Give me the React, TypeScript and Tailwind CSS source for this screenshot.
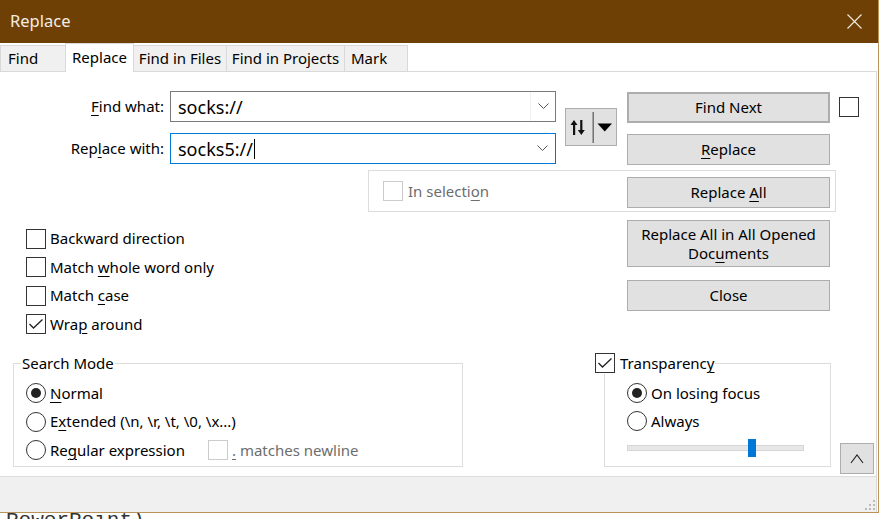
import React from 'react';

function CheckBox({ checked = false, disabled = false }: { checked?: boolean; disabled?: boolean }) {
  return (
    <span
      className={`flex h-[20px] w-[20px] shrink-0 items-center justify-center border bg-white ${
        disabled ? 'border-[#cccccc]' : 'border-[#333333]'
      }`}
    >
      {checked && (
        <svg width="16" height="12" viewBox="0 0 16 12">
          <polyline points="1.5,6 5.5,10 14.5,1.5" fill="none" stroke="#222" strokeWidth="1.3" />
        </svg>
      )}
    </span>
  );
}

function Radio({ on = false }: { on?: boolean }) {
  return (
    <span className="flex h-[20px] w-[20px] shrink-0 items-center justify-center rounded-full border border-[#333333] bg-white">
      {on && <span className="h-[10px] w-[10px] rounded-full bg-[#222]" />}
    </span>
  );
}

function Btn({ children, className = '' }: { children: React.ReactNode; className?: string }) {
  return (
    <div
      className={`flex items-center justify-center border border-[#adadad] bg-[#e1e1e1] text-center leading-[19px] ${className}`}
    >
      {children}
    </div>
  );
}

function Combo({ value, focused = false, caret = false }: { value: string; focused?: boolean; caret?: boolean }) {
  return (
    <div
      className={`ml-[6px] flex h-[31px] w-[386px] items-center border bg-white ${
        focused ? 'border-[#0078d7]' : 'border-[#7a7a7a]'
      }`}
    >
      <div className="flex flex-1 items-center pl-[7px] text-[18px] leading-[24px]">
        {value}
        {caret && <span className="ml-[1px] h-[20px] w-px bg-black" />}
      </div>
      <div className={`flex h-full w-[25px] items-center justify-center ${focused ? '' : 'border-l border-[#f0f0f0]'}`}>
        <svg width="11" height="7" viewBox="0 0 11 7">
          <polyline points="0.5,0.5 5.5,5.5 10.5,0.5" fill="none" stroke="#555" strokeWidth="1" />
        </svg>
      </div>
    </div>
  );
}

const U = ({ children }: { children: React.ReactNode }) => (
  <span className="underline decoration-1 underline-offset-[3px]">{children}</span>
);

export default function App() {
  return (
    <div className="relative h-[519px] w-[886px] overflow-hidden bg-white font-['Noto_Sans',sans-serif] text-[15px] text-black">
      <div className="flex h-[513px] w-[879px] flex-col border-b border-r border-[#b8935a]">
        {/* title bar */}
        <div className="flex h-[43px] shrink-0 items-center justify-between bg-[#6e4006] pl-[10px] pr-[16px]">
          <span className="text-[16.5px] text-[#f4ede2]">Replace</span>
          <svg width="15" height="15" viewBox="0 0 15 15">
            <path d="M0.5 0.5 L14.5 14.5 M14.5 0.5 L0.5 14.5" stroke="#f4ede2" strokeWidth="1.1" />
          </svg>
        </div>

        {/* tabs */}
        <div className="flex h-[28px] shrink-0 items-end bg-white">
          <div className="flex h-[26px] w-[65px] items-center border-l border-t border-[#d9d9d9] bg-[#f0f0f0] pl-[7px]">
            Find
          </div>
          <div className="relative z-10 -mb-px flex h-[29px] w-[69px] items-start justify-center border-l border-r border-t border-[#d9d9d9] bg-white pt-[2px]">
            Replace
          </div>
          <div className="flex h-[26px] w-[92px] items-center justify-center border-t border-[#d9d9d9] bg-[#f0f0f0]">
            Find in Files
          </div>
          <div className="flex h-[26px] w-[118px] items-center justify-center border-l border-t border-[#d9d9d9] bg-[#f0f0f0]">
            Find in Projects
          </div>
          <div className="flex h-[26px] w-[64px] items-center border-l border-r border-t border-[#d9d9d9] bg-[#f0f0f0] pl-[6px]">
            Mark
          </div>
        </div>

        {/* tab panel */}
        <div className="mr-[1px] flex flex-1 flex-col border-r border-t border-[#d9d9d9]">
          <div className="flex-1 bg-white">
            <div className="flex items-start">
              {/* left block */}
              <div className="w-[556px] shrink-0">
                <div className="mt-[19px] flex items-center">
                  <span className="w-[164px] text-right">
                    <U>F</U>ind what:
                  </span>
                  <Combo value="socks://" />
                </div>
                <div className="mt-[11px] flex items-center">
                  <span className="w-[164px] text-right">
                    Rep<U>l</U>ace with:
                  </span>
                  <Combo value="socks5://" focused caret />
                </div>
                <div className="ml-[368px] mt-[6px] flex h-[42px] w-[468px] items-center gap-[5px] border border-[#dcdcdc] pl-[14px] text-[#6d6d6d]">
                  <CheckBox disabled />
                  <span>
                    In selecti<U>o</U>n
                  </span>
                </div>
                <div className="mt-[12px] pl-[26px]">
                  <div className="flex h-[29px] items-center gap-[4px]">
                    <CheckBox />
                    <span>Backward direction</span>
                  </div>
                  <div className="flex h-[28px] items-center gap-[4px]">
                    <CheckBox />
                    <span>
                      Match <U>w</U>hole word only
                    </span>
                  </div>
                  <div className="flex h-[29px] items-center gap-[4px]">
                    <CheckBox />
                    <span>
                      Match <U>c</U>ase
                    </span>
                  </div>
                  <div className="flex h-[28px] items-center gap-[4px]">
                    <CheckBox checked />
                    <span>
                      Wra<U>p</U> around
                    </span>
                  </div>
                </div>
              </div>

              {/* swap direction button */}
              <div className="ml-[9px] mt-[36px] h-[38px] w-[52px] shrink-0 border border-[#adadad] bg-[#e1e1e1]">
                <svg width="50" height="36" viewBox="0 0 50 36">
                  <path d="M8 11 L4.5 16 L11.5 16 Z" fill="#111" />
                  <rect x="7" y="15" width="2.2" height="11" fill="#111" />
                  <rect x="14.2" y="11" width="2.2" height="11" fill="#111" />
                  <path d="M15.3 26 L11.8 21 L18.8 21 Z" fill="#111" />
                  <rect x="26.5" y="3" width="1.4" height="31" fill="#6a6a6a" />
                  <path d="M31.5 14.5 L46 14.5 L38.75 22.5 Z" fill="#000" />
                </svg>
              </div>

              {/* action buttons */}
              <div className="ml-[10px] mt-[20px] flex w-[203px] shrink-0 flex-col">
                <Btn className="h-[31px] border-2 border-[#0078d7]">Find Next</Btn>
                <Btn className="mt-[11px] h-[31px]">
                  <span>
                    <U>R</U>eplace
                  </span>
                </Btn>
                <Btn className="mt-[12px] h-[31px]">
                  <span>
                    Replace <U>A</U>ll
                  </span>
                </Btn>
                <Btn className="mt-[12px] h-[47px]">
                  <span>
                    Replace All in All Opened
                    <br />
                    Doc<U>u</U>ments
                  </span>
                </Btn>
                <Btn className="mt-[13px] h-[31px]">Close</Btn>
              </div>

              <div className="ml-[9px] mt-[25px]">
                <CheckBox />
              </div>
            </div>

            {/* search mode + transparency */}
            <div className="mt-[14px] flex items-start">
              <fieldset className="ml-[13px] h-[115px] w-[450px] shrink-0 border border-[#dcdcdc]">
                <legend className="ml-[7px] px-[1px] leading-[22px]">Search Mode</legend>
                <div className="mt-[5px] pl-[12px]">
                  <div className="flex h-[28px] items-center gap-[4px]">
                    <Radio on />
                    <span>
                      <U>N</U>ormal
                    </span>
                  </div>
                  <div className="flex h-[29px] items-center gap-[4px]">
                    <Radio />
                    <span>
                      E<U>x</U>tended (\n, \r, \t, \0, \x...)
                    </span>
                  </div>
                  <div className="flex h-[28px] items-center gap-[4px]">
                    <Radio />
                    <span className="w-[154px]">
                      Re<U>g</U>ular expression
                    </span>
                    <CheckBox disabled />
                    <span className="text-[#6d6d6d]">
                      <U>.</U> matches newline
                    </span>
                  </div>
                </div>
              </fieldset>

              <fieldset className="ml-[141px] h-[115px] w-[227px] shrink-0 border border-[#dcdcdc]">
                <legend className="-ml-[10px] pr-[1px] leading-[22px]">
                  <span className="flex items-center gap-[5px]">
                    <CheckBox checked />
                    <span>
                      Transparenc<U>y</U>
                    </span>
                  </span>
                </legend>
                <div className="mt-[5px] pl-[22px]">
                  <div className="flex h-[28px] items-center gap-[4px]">
                    <Radio on />
                    <span>On losing focus</span>
                  </div>
                  <div className="flex h-[28px] items-center gap-[4px]">
                    <Radio />
                    <span>Always</span>
                  </div>
                  <div className="relative mt-[4px] flex h-[18px] w-[177px] items-center">
                    <div className="h-[6px] w-full border border-[#d6d6d6] bg-[#e7e7e7]" />
                    <div className="absolute left-[121px] top-0 h-[18px] w-[8px] bg-[#0078d7]" />
                  </div>
                </div>
              </fieldset>

              <Btn className="ml-[9px] mt-[91px] h-[31px] w-[34px] shrink-0">
                <svg width="14" height="10" viewBox="0 0 14 10">
                  <polyline points="1,9 7,1 13,9" fill="none" stroke="#222" strokeWidth="1.1" />
                </svg>
              </Btn>
            </div>
          </div>

          {/* status strip */}
          <div className="flex h-[36px] shrink-0 items-end justify-end border-t border-[#dcdcdc] bg-[#f0f0f0] pb-[1px]">
            <svg width="11" height="11" viewBox="0 0 11 11">
              <rect x="8" y="0" width="2" height="2" fill="#bcbcbc" />
              <rect x="4" y="4" width="2" height="2" fill="#bcbcbc" />
              <rect x="8" y="4" width="2" height="2" fill="#bcbcbc" />
              <rect x="0" y="8" width="2" height="2" fill="#bcbcbc" />
              <rect x="4" y="8" width="2" height="2" fill="#bcbcbc" />
              <rect x="8" y="8" width="2" height="2" fill="#bcbcbc" />
            </svg>
          </div>
        </div>
      </div>

      {/* editor text peeking out below the dialog */}
      <div className="h-[6px] overflow-hidden pl-[6px]">
        <div className="-mt-[3px] font-['Liberation_Mono',monospace] text-[21px] leading-[21px] text-[#333]">
          PowerPoint)
        </div>
      </div>
    </div>
  );
}
